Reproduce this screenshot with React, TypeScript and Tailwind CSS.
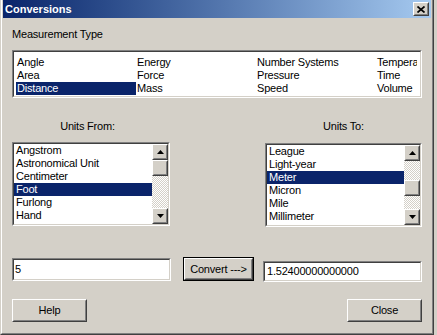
import type { ReactNode } from "react";

const measureCols = [
  ["Angle", "Area", "Distance"],
  ["Energy", "Force", "Mass"],
  ["Number Systems", "Pressure", "Speed"],
  ["Temperature", "Time", "Volume"],
];

const fromUnits = ["Angstrom", "Astronomical Unit", "Centimeter", "Foot", "Furlong", "Hand"];
const toUnits = ["League", "Light-year", "Meter", "Micron", "Mile", "Millimeter"];

function Raised({ className = "", children }: { className?: string; children?: ReactNode }) {
  return (
    <div className={`border border-t-white border-l-white border-r-[#404040] border-b-[#404040] bg-[#d4d0c8] ${className}`}>
      <div className="w-full h-full border border-t-[#d4d0c8] border-l-[#d4d0c8] border-r-[#808080] border-b-[#808080] flex items-center justify-center">
        {children}
      </div>
    </div>
  );
}

function Sunken({ className = "", children }: { className?: string; children?: ReactNode }) {
  return (
    <div className={`border border-t-[#808080] border-l-[#808080] border-r-white border-b-white ${className}`}>
      <div className="w-full h-full border border-t-[#404040] border-l-[#404040] border-r-[#d4d0c8] border-b-[#d4d0c8] bg-white overflow-hidden">
        {children}
      </div>
    </div>
  );
}

function Arrow({ down = false }: { down?: boolean }) {
  return (
    <svg width="7" height="4" viewBox="0 0 7 4" className={down ? "rotate-180" : ""}>
      <path d="M0 4 L3.5 0 L7 4Z" fill="black" />
    </svg>
  );
}

function ScrollBar({ thumb }: { thumb: string }) {
  return (
    <div className="w-[16px] h-full flex flex-col shrink-0">
      <Raised className="h-[16px] w-[16px]">
        <Arrow />
      </Raised>
      <div className="flex-1 bg-[repeating-conic-gradient(#d4d0c8_0_25%,#ffffff_0_50%)] bg-size-[2px_2px]">
        <Raised className={`h-[16px] w-[16px] ${thumb}`} />
      </div>
      <Raised className="h-[16px] w-[16px]">
        <Arrow down />
      </Raised>
    </div>
  );
}

function UnitList({ items, selected, thumb }: { items: string[]; selected: string; thumb: string }) {
  return (
    <Sunken className="h-[84px] w-full">
      <div className="flex h-full">
        <div className="flex-1 flex flex-col">
          {items.map((u) => (
            <div
              key={u}
              className={`h-[13px] leading-[13px] pl-[2px] whitespace-nowrap ${u === selected ? "bg-[#0a246a] text-white" : ""}`}
            >
              {u}
            </div>
          ))}
        </div>
        <ScrollBar thumb={thumb} />
      </div>
    </Sunken>
  );
}

export default function App() {
  return (
    <div className="w-[437px] h-[335px] bg-[#d4d0c8] overflow-hidden font-['Liberation_Sans',Arial,sans-serif] text-[11px] tracking-[-0.2px] text-black">
      <div className="w-[434px] h-[335px] border-l border-l-[#d4d0c8] border-r border-r-[#404040] border-b border-b-[#404040]">
        <div className="w-full h-full border-l border-l-white border-r border-r-[#808080] border-b border-b-[#808080] px-[1px] pb-[1px] flex flex-col">
          {/* title bar */}
          <div className="h-[18px] shrink-0 flex items-center justify-between bg-linear-to-r from-[#0a246a] to-[#a6caf0]">
            <span className="pl-[2px] text-white font-bold tracking-normal leading-[18px]">Conversions</span>
            <Raised className="w-[16px] h-[14px] mr-[2px]">
              <svg width="8" height="7" viewBox="0 0 8 7">
                <path d="M0.5 0.5 L7.5 6.5 M7.5 0.5 L0.5 6.5" stroke="black" strokeWidth="1.7" />
              </svg>
            </Raised>
          </div>

          <div className="flex flex-col px-[9px]">
            <div className="mt-[10px] leading-[13px]">Measurement Type</div>

            <Sunken className="mt-[9px] h-[48px] w-full">
              <div className="pt-[4px] pl-[2px] w-[403px] overflow-hidden flex">
                {measureCols.map((col) => (
                  <div key={col[0]} className="w-[120px] shrink-0 flex flex-col">
                    {col.map((t) => (
                      <div
                        key={t}
                        className={`h-[13px] leading-[13px] pl-[1px] whitespace-nowrap ${t === "Distance" ? "bg-[#0a246a] text-white" : ""}`}
                      >
                        {t}
                      </div>
                    ))}
                  </div>
                ))}
              </div>
            </Sunken>

            <div className="mt-[22px] flex justify-between">
              <div className="w-[158px] flex flex-col">
                <div className="leading-[13px] text-center pr-[7px]">Units From:</div>
                <div className="mt-[9px]">
                  <UnitList items={fromUnits} selected="Foot" thumb="" />
                </div>
              </div>
              <div className="w-[157px] flex flex-col">
                <div className="leading-[13px] text-center">Units To:</div>
                <div className="mt-[10px]">
                  <UnitList items={toUnits} selected="Meter" thumb="mt-[19px]" />
                </div>
              </div>
            </div>

            <div className="mt-[30px] flex items-start">
              <Sunken className="mt-[1px] w-[159px] h-[23px]">
                <div className="h-full flex items-center pl-[1px]">5</div>
              </Sunken>
              <div className="ml-[12px] w-[71px] h-[24px] border border-black">
                <Raised className="w-full h-full">Convert ---&gt;</Raised>
              </div>
              <Sunken className="ml-[9px] mt-[4px] w-[159px] h-[21px]">
                <div className="h-full flex items-center pl-[2px]">1.52400000000000</div>
              </Sunken>
            </div>

            <div className="mt-[17px] flex justify-between">
              <Raised className="w-[75px] h-[23px]">Help</Raised>
              <Raised className="w-[75px] h-[23px]">Close</Raised>
            </div>
          </div>
        </div>
      </div>
    </div>
  );
}
